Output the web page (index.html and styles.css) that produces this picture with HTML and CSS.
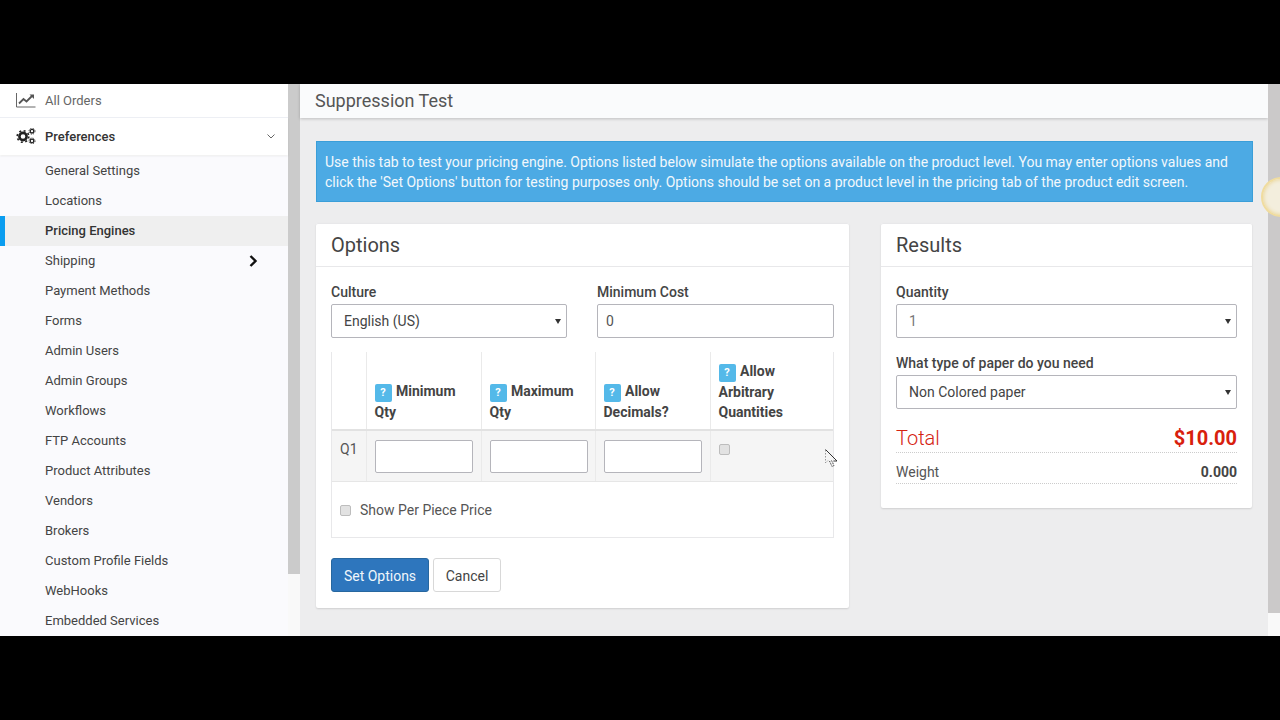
FILE: index.html
```html
<!DOCTYPE html>
<html lang="en">
<head>
<meta charset="utf-8">
<title>Suppression Test</title>
<link rel="stylesheet" href="styles.css">
</head>
<body>
<div class="app">
  <aside class="sidebar">
    <nav class="nav">
      <a class="nav-top nav-orders">
        <svg class="nav-icon" viewBox="0 0 20 16" width="20" height="16"><path d="M.5 1v14h19" fill="none" stroke="#666" stroke-width="1"/><path d="M3 11.5 7.5 7l3 2.5L16 4" fill="none" stroke="#555" stroke-width="1.8"/><path d="M13.5 2.5H18V7z" fill="#555"/></svg>
        <span>All Orders</span>
      </a>
      <a class="nav-top nav-prefs">
        <svg class="nav-icon" viewBox="0 0 20 16" width="20" height="16"><g fill="none" stroke="#222"><circle cx="7" cy="8.5" r="3.6" stroke-width="2.6"/><circle cx="7" cy="8.5" r="5.8" stroke-width="1.6" stroke-dasharray="2 2.55"/><circle cx="16" cy="3.2" r="1.8" stroke-width="1.3"/><circle cx="16" cy="13" r="1.8" stroke-width="1.3"/><circle cx="16" cy="3.2" r="3" stroke-width=".9" stroke-dasharray="1.2 1.2"/><circle cx="16" cy="13" r="3" stroke-width=".9" stroke-dasharray="1.2 1.2"/></g></svg>
        <span>Preferences</span>
        <svg class="nav-caret" viewBox="0 0 8 5" width="8" height="5"><path d="M.5.5 4 4 7.500.5" fill="none" stroke="#666"/></svg>
      </a>
      <ul class="subnav">
        <li>General Settings</li>
        <li>Locations</li>
        <li class="active">Pricing Engines</li>
        <li class="has-sub">Shipping
          <svg viewBox="0 0 9 12" width="9" height="12"><path d="M1.5 1 6.500 6 1.500 11" fill="none" stroke="#111" stroke-width="2.4"/></svg>
        </li>
        <li>Payment Methods</li>
        <li>Forms</li>
        <li>Admin Users</li>
        <li>Admin Groups</li>
        <li>Workflows</li>
        <li>FTP Accounts</li>
        <li>Product Attributes</li>
        <li>Vendors</li>
        <li>Brokers</li>
        <li>Custom Profile Fields</li>
        <li>WebHooks</li>
        <li>Embedded Services</li>
      </ul>
    </nav>
    <div class="side-scroll"><div class="side-thumb"></div></div>
  </aside>
  <main class="main">
    <header class="page-head">Suppression Test</header>
    <div class="content">
      <div class="info">Use this tab to test your pricing engine. Options listed below simulate the options available on the product level. You may enter options values and click the 'Set Options' button for testing purposes only. Options should be set on a product level in the pricing tab of the product edit screen.</div>
      <div class="cols">
        <section class="card card-options">
          <h2 class="card-title">Options</h2>
          <div class="card-body">
            <div class="form-row">
              <label class="field">
                <span class="label">Culture</span>
                <span class="select">English (US)</span>
              </label>
              <label class="field field-cost">
                <span class="label">Minimum Cost</span>
                <span class="input input-cost">0</span>
              </label>
            </div>
            <div class="box">
              <table class="qty">
                <thead>
                  <tr>
                    <th class="c0"></th>
                    <th class="c1"><i class="q">?</i> Minimum Qty</th>
                    <th class="c2"><i class="q">?</i> Maximum Qty</th>
                    <th class="c3"><i class="q">?</i> Allow Decimals?</th>
                    <th class="c4"><i class="q">?</i> Allow Arbitrary Quantities</th>
                  </tr>
                </thead>
                <tbody>
                  <tr>
                    <td>Q1</td>
                    <td><span class="input input-q"></span></td>
                    <td><span class="input input-q"></span></td>
                    <td><span class="input input-q"></span></td>
                    <td><span class="check"></span></td>
                  </tr>
                </tbody>
              </table>
              <div class="per-piece"><span class="check"></span>Show Per Piece Price</div>
            </div>
            <div class="actions">
              <button class="btn btn-primary">Set Options</button>
              <button class="btn btn-default">Cancel</button>
            </div>
          </div>
        </section>
        <section class="card card-results">
          <h2 class="card-title">Results</h2>
          <div class="card-body">
            <div class="field result-field">
              <span class="label">Quantity</span>
              <span class="select select-muted">1</span>
            </div>
            <div class="field result-field">
              <span class="label">What type of paper do you need</span>
              <span class="select">Non Colored paper</span>
            </div>
            <div class="total"><span>Total</span><b>$10.00</b></div>
            <div class="weight"><span>Weight</span><b>0.000</b></div>
          </div>
        </section>
      </div>
    </div>
    <div class="main-scroll"><div class="main-thumb"></div></div>
  </main>
  <div class="glow"></div>
  <svg class="cursor" viewBox="0 0 13 19" width="13" height="19"><path d="M.5.5 12 12H8.500" fill="none" stroke="#333"/><path d="M.5 1v13l3-3" fill="none" stroke="#999" stroke-dasharray="1.500 1.500"/><path d="M4.500 12l2.500 5.500 2-1-2.500-5" fill="none" stroke="#444" stroke-dasharray="1.500 1"/></svg>
</div>
</body>
</html>
```
FILE: styles.css
```css
* { box-sizing: border-box; }
html, body { margin: 0; height: 100%; }
body {
  background: #000;
  padding: 84px 0;
  font-family: Roboto, "Liberation Sans", sans-serif;
  font-size: 14px;
  color: #444;
  overflow: hidden;
}
.app { position: relative; display: flex; height: 552px; overflow: hidden; background: #ededee; }

.sidebar { display: flex; width: 300px; flex: none; overflow: hidden; font-size: 13px; }
.nav { width: 288px; flex: none; background: #fff; }
.nav-top { display: flex; align-items: center; padding: 0 0 1px 16px; background: #fff; }
.nav-icon { flex: none; margin-right: 9px; }
.nav-orders { height: 34px; color: #666; border-bottom: 1px solid #eef0f5; }
.nav-prefs { height: 37px; color: #333; font-weight: 500; box-shadow: 0 1px 2px rgba(0,0,0,.08); position: relative; }
.nav-caret { margin-left: auto; margin-right: 13px; }
.subnav { list-style: none; margin: 0; padding: 0; background: #fafafd; }
.subnav li { display: flex; align-items: center; justify-content: space-between; height: 30px; padding: 0 30px 1px 45px; color: #444; }
.subnav li:first-child { margin-top: 1px; }
.subnav .active { background: #efefef; box-shadow: inset 5px 0 0 #0a9df0; color: #333; font-weight: 500; }
.side-scroll { width: 12px; flex: none; background: #f9f9f9; }
.side-thumb { height: 490px; background: #cbcbcb; }

.main { position: relative; flex: 1; min-width: 0; padding-right: 12px; }
.page-head { height: 34px; padding: 6px 15px 0; background: #fafbfc; font-size: 18px; line-height: 21px; color: #555; box-shadow: 0 1px 3px rgba(0,0,0,.2); }
.content { padding: 23px 15px 0 16px; }
.info { height: 61px; padding: 10px 8px 0; background: #4caae4; border: 1px solid #3a9ed8; color: #f2f8fc; line-height: 20px; }
.cols { display: flex; align-items: flex-start; gap: 32px; margin-top: 21px; }
.card { background: #fff; border-radius: 2px; box-shadow: 0 1px 2px rgba(0,0,0,.13), inset 0 1px 0 #e8e8ea; }
.card-options { width: 533px; height: 385px; }
.card-results { width: 371px; height: 285px; }
.card-title { margin: 0; height: 44px; padding: 0 15px; border-bottom: 1px solid #e8e8ea; font-size: 20px; font-weight: 400; line-height: 45px; color: #444; }
.card-body { padding: 16px 15px 0; }

.form-row { display: flex; gap: 30px; }
.form-row .field { width: 236px; }
.form-row .field-cost { width: 237px; }
.field { display: block; }
.label { display: block; height: 21px; line-height: 18px; font-weight: 500; color: #444; }
.select, .input { display: block; height: 34px; border: 1px solid #b5b5bb; border-radius: 2px; background: #fff; line-height: 32px; }
.select { position: relative; padding-left: 12px; color: #444; }
.select::after { content: ""; position: absolute; right: 5px; top: 14px; border: 3.500px solid transparent; border-top: 5px solid #333; border-bottom: 0; }
.select-muted { color: #777; }
.input-cost { padding-left: 8px; color: #555; }

.box { margin-top: 14px; height: 186px; border-right: 1px solid #e8e8ea; border-bottom: 1px solid #e8e8ea; border-left: 1px solid #e8e8ea; }
.qty { width: 501px; border-collapse: collapse; table-layout: fixed; }
.qty th { height: 78px; padding: 8px 8px 7px; border-right: 1px solid #eaeaea; border-bottom: 2px solid #e2e2e2; text-align: left; vertical-align: bottom; font-weight: 700; line-height: 20px; color: #444; }
.qty th:last-child { border-right: 0; }
.qty .c0 { width: 34px; }
.qty .c1 { width: 115px; }
.qty .c2 { width: 114px; }
.qty .c3 { width: 115px; }
.q { display: inline-block; width: 17px; height: 18px; margin-right: 1px; border-radius: 2px; background: #54b9e9; color: #fff; font-style: normal; font-size: 11px; line-height: 18px; text-align: center; vertical-align: baseline; }
.qty td { height: 50px; padding: 8px; background: #f5f5f5; border-right: 1px solid #eaeaea; border-bottom: 1px solid #e6e6e6; vertical-align: top; line-height: 20px; color: #555; }
.qty td:last-child { border-right: 0; }
.input-q { width: 98px; height: 33px; margin-top: 1px; border-width: 1.500px; }
.check { display: inline-block; width: 11px; height: 11px; border: 1px solid #bdbdbd; border-radius: 2px; background: #e2e2e2; }
.qty .check { display: block; margin-top: 5px; }
.per-piece { display: flex; align-items: center; gap: 9px; height: 56px; padding-left: 8px; color: #555; }
.actions { display: flex; gap: 4px; margin-top: 20px; }
.btn { height: 34px; padding: 1px 0 0; border-radius: 3px; font: 14px/1 Roboto, sans-serif; white-space: nowrap; }
.btn-primary { width: 98px; background: #2e76bd; border: 1px solid #27679f; color: #f0f6fb; }
.btn-default { width: 68px; background: #fff; border: 1.500px solid #d8d8d8; color: #444; }

.result-field { margin-bottom: 16px; }
.total { display: flex; justify-content: space-between; align-items: center; height: 30px; margin-top: -2px; border-bottom: 1px dotted #ccc; font-size: 20px; color: #d52211; }
.total span { font-weight: 300; }
.total b { font-size: 20px; font-weight: 700; color: #d8200d; }
.weight { display: flex; justify-content: space-between; align-items: center; height: 31px; padding-top: 8px; border-bottom: 1px dotted #ccc; color: #555; }
.weight b { font-weight: 700; color: #444; }

.main-scroll { position: absolute; top: 0; right: 0; bottom: 0; width: 12px; background: #f9f9f9; }
.main-thumb { height: 529px; background: #cbc9c9; }
.glow { position: absolute; left: 1261px; top: 93px; width: 40px; height: 40px; border-radius: 50%; background: #f3eedd; border: 2px solid #f0dc9f; box-shadow: inset 0 0 4px #e8cf85; }
.cursor { position: absolute; left: 825px; top: 365px; }
```
